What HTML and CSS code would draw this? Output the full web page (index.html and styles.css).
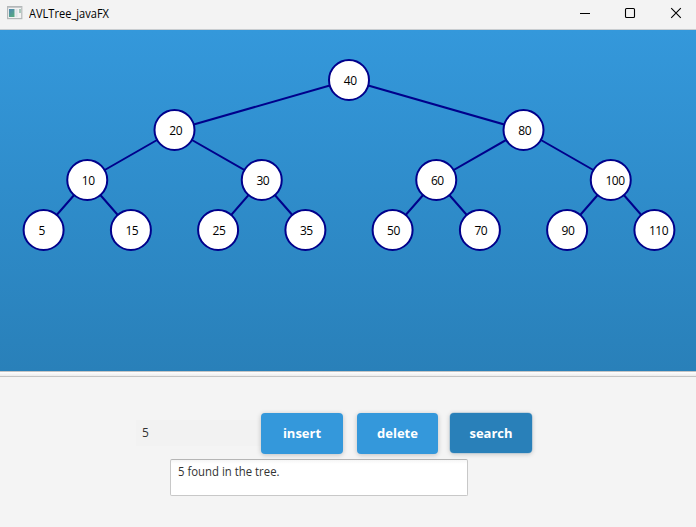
FILE: index.html
```html
<!DOCTYPE html>
<html lang="en">
<head>
<meta charset="utf-8">
<title>AVLTree_javaFX</title>
<link rel="stylesheet" href="styles.css">
</head>
<body>
<div class="window">
  <header class="titlebar">
    <svg class="app-icon" width="16" height="14" viewBox="0 0 16 14">
      <defs><linearGradient id="pane" x2="0.6" y2="1"><stop offset="0" stop-color="#4f87b3"/><stop offset="1" stop-color="#56a783"/></linearGradient></defs>
      <rect x="0.6" y="0.6" width="14.2" height="12" fill="#f3f3f3" stroke="#b4b8b9" stroke-width="1.2"/>
      <path d="M1 1.5h13.5" stroke="#c5c8ca"/>
      <rect x="2" y="3" width="5.5" height="8" fill="url(#pane)"/>
      <rect x="8.5" y="3" width="2" height="8" fill="#dfe3e8"/>
      <rect x="12" y="3" width="2" height="4" fill="#a9c9bd"/>
    </svg>
    <h1 class="title"><svg width="90" height="20"><text x="0" y="14" textLength="80" lengthAdjust="spacingAndGlyphs">AVLTree_javaFX</text></svg></h1>
    <div class="controls">
      <svg width="46" height="29"><path d="M20 13.5h10" stroke="#000"/></svg>
      <svg width="46" height="29"><rect x="19.5" y="8.5" width="9" height="9" rx="1" fill="none" stroke="#000" stroke-width="1.1"/></svg>
      <svg width="46" height="29"><path d="M19.2 8.2l9.6 9.6M28.8 8.2l-9.6 9.6" stroke="#000" stroke-width="1.1"/></svg>
    </div>
  </header>
  <main class="tree-pane">
    <svg class="tree" width="696" height="341" viewBox="0 30 696 341">
      <path class="edges" d="M349 80L174.5 130M349 80L523.5 130M174.5 130L87.25 180M174.5 130L261.75 180M523.5 130L436.25 180M523.5 130L610.75 180M87.25 180L43.6 230M87.25 180L130.9 230M261.75 180L218.1 230M261.75 180L305.4 230M436.25 180L392.6 230M436.25 180L479.9 230M610.75 180L567.1 230M610.75 180L654.4 230"/>
      <g class="nodes">
        <circle cx="349" cy="80" r="20"/><circle cx="174.5" cy="130" r="20"/><circle cx="523.5" cy="130" r="20"/>
        <circle cx="87.25" cy="180" r="20"/><circle cx="261.75" cy="180" r="20"/><circle cx="436.25" cy="180" r="20"/><circle cx="610.75" cy="180" r="20"/>
        <circle cx="43.6" cy="230" r="20"/><circle cx="130.9" cy="230" r="20"/><circle cx="218.1" cy="230" r="20"/><circle cx="305.4" cy="230" r="20"/>
        <circle cx="392.6" cy="230" r="20"/><circle cx="479.9" cy="230" r="20"/><circle cx="567.1" cy="230" r="20"/><circle cx="654.4" cy="230" r="20"/>
      </g>
      <g class="keys">
        <text x="343.8" y="85">40</text><text x="169.3" y="135">20</text><text x="518.3" y="135">80</text>
        <text x="81.8" y="185">10</text><text x="256.4" y="185">30</text><text x="430.9" y="185">60</text><text x="605.4" y="185">100</text>
        <text x="38.6" y="235">5</text><text x="125.4" y="235">15</text><text x="212.6" y="235">25</text><text x="299.9" y="235">35</text>
        <text x="387.1" y="235">50</text><text x="474.4" y="235">70</text><text x="561.6" y="235">90</text><text x="648.9" y="235">110</text>
      </g>
    </svg>
  </main>
  <div class="divider"></div>
  <section class="panel">
    <div class="actions">
      <div class="field">5</div>
      <button class="btn insert">insert</button>
      <button class="btn delete">delete</button>
      <button class="btn search">search</button>
    </div>
    <div class="output"><svg width="110" height="18"><text x="0" y="13" textLength="101.5" lengthAdjust="spacingAndGlyphs">5 found in the tree.</text></svg></div>
  </section>
</div>
</body>
</html>
```
FILE: styles.css
```css
* { box-sizing: border-box; }
body { margin: 0; font-family: "Open Sans", "Noto Sans", sans-serif; font-size: 12px; }
svg { display: block; }
.window { width: 696px; height: 527px; display: flex; flex-direction: column; background: #f3f3f3; overflow: hidden; }
.titlebar { height: 30px; flex: none; display: flex; align-items: flex-start; border-bottom: 1px solid #c9cdd0; padding-left: 7px; }
.app-icon { margin-top: 6px; }
.title { margin: 4px 0 0 6px; font-size: 12px; font-weight: 400; }
.controls { display: flex; margin-left: auto; margin-right: -2px; }
.tree-pane { height: 341px; flex: none; background: linear-gradient(#3498db, #2980b9); }
.edges { stroke: #00008b; stroke-width: 2; fill: none; }
.nodes circle { fill: #fff; stroke: #00008b; stroke-width: 2; }
.keys text { fill: #000; letter-spacing: -0.4px; }
.divider { height: 6px; flex: none; border-top: 1px solid #c4c4c4; border-bottom: 1px solid #c4c4c4; background: linear-gradient(#fff, #ececec); }
.panel { flex: 1; padding-top: 36px; background: #f4f4f4; }
.actions { display: flex; align-items: flex-start; height: 46px; padding-left: 136px; }
.field { width: 125px; height: 26px; margin-top: 7px; padding-left: 6px; line-height: 26px; background: #f2f2f2; color: #333; }
.btn { height: 41px; padding: 0; border: 0; border-radius: 4px; background: #3498db; color: #fff; font: 700 13px/41px "Open Sans", sans-serif; box-shadow: 0 1px 5px rgba(0, 0, 0, .22); }
.insert { width: 82px; }
.delete { width: 81px; margin-left: 14px; }
.search { width: 82px; height: 40px; margin-left: 12px; background: #2980b9; box-shadow: 0 0 0 0.6px #a8c3d6, 0 1px 5px rgba(0, 0, 0, .22); }
.output { width: 298px; height: 37px; margin-left: 170px; padding: 3px 0 0 7px; background: linear-gradient(#f5f5f5, #fff 4px); border: 1px solid #c8c8c8; border-top-color: #b5b5b5; border-radius: 2px; }
.output text { fill: #333; }
```
